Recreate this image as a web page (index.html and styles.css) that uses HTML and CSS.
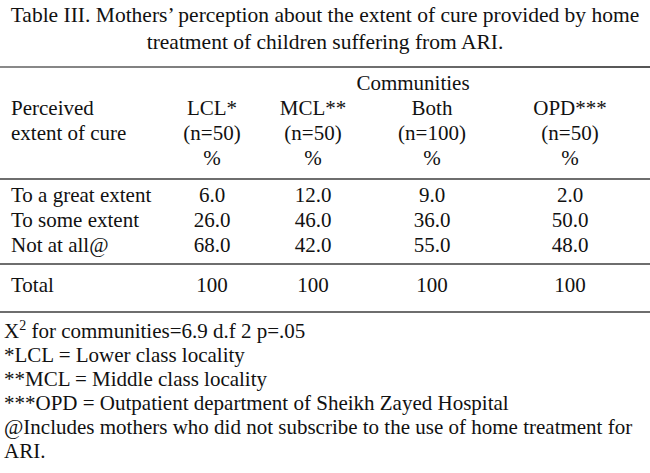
FILE: index.html
```html
<!DOCTYPE html>
<html lang="en">
<head>
<meta charset="utf-8">
<title>Table III</title>
<link rel="stylesheet" href="styles.css">
</head>
<body>
<div class="page">
  <h1 class="title">Table III. Mothers’ perception about the extent of cure provided by home<br>treatment of children suffering from ARI.</h1>
  <div class="rule rule-top"></div>
  <div class="grid head">
    <div class="label"></div>
    <div class="cell"></div>
    <div class="span-communities">Communities</div>
    <div class="cell"></div>
    <div class="label">Perceived</div>
    <div class="cell">LCL*</div>
    <div class="cell">MCL**</div>
    <div class="cell">Both</div>
    <div class="cell">OPD***</div>
    <div class="label">extent of cure</div>
    <div class="cell">(n=50)</div>
    <div class="cell">(n=50)</div>
    <div class="cell">(n=100)</div>
    <div class="cell">(n=50)</div>
    <div class="label"></div>
    <div class="cell">%</div>
    <div class="cell">%</div>
    <div class="cell">%</div>
    <div class="cell">%</div>
  </div>
  <div class="rule"></div>
  <div class="grid body">
    <div class="label">To a great extent</div>
    <div class="cell">6.0</div>
    <div class="cell">12.0</div>
    <div class="cell">9.0</div>
    <div class="cell">2.0</div>
    <div class="label">To some extent</div>
    <div class="cell">26.0</div>
    <div class="cell">46.0</div>
    <div class="cell">36.0</div>
    <div class="cell">50.0</div>
    <div class="label">Not at all@</div>
    <div class="cell">68.0</div>
    <div class="cell">42.0</div>
    <div class="cell">55.0</div>
    <div class="cell">48.0</div>
  </div>
  <div class="rule"></div>
  <div class="grid total">
    <div class="label">Total</div>
    <div class="cell">100</div>
    <div class="cell">100</div>
    <div class="cell">100</div>
    <div class="cell">100</div>
  </div>
  <div class="rule"></div>
  <div class="notes">
    <p>X<sup class="sq">2</sup> for communities=6.9 d.f 2 p=.05</p>
    <p>*LCL = Lower class locality</p>
    <p>**MCL = Middle class locality</p>
    <p>***OPD = Outpatient department of Sheikh Zayed Hospital</p>
    <p>@Includes mothers who did not subscribe to the use of home treatment for ARI.</p>
  </div>
</div>
</body>
</html>
```

FILE: styles.css
```css
html, body {
  margin: 0;
  padding: 0;
  background: #ffffff;
}

.page {
  width: 650px;
  font-family: "Liberation Serif", "Times New Roman", serif;
  font-size: 21px;
  color: #111111;
}

.title {
  margin: 0;
  padding-top: 2px;
  font-size: 21.5px;
  font-weight: normal;
  line-height: 27px;
  text-align: center;
}

.rule {
  height: 2px;
  background: #6e6e6e;
}

.rule-top {
  margin-top: 10px;
  background: linear-gradient(to right, #8a8a8a 0%, #7a7a7a 40%, #555555 100%);
}

.grid {
  display: grid;
  grid-template-columns: 163px 98px 104px 134px 142px;
  line-height: 25px;
}

.label {
  padding-left: 11px;
  white-space: nowrap;
}

.cell {
  text-align: center;
  white-space: nowrap;
}

.span-communities {
  grid-column: 3 / 5;
  padding-left: 66px;
  text-align: center;
}

.head {
  padding-top: 3px;
  padding-bottom: 7px;
}

.body {
  padding-top: 3px;
  padding-bottom: 5px;
}

.total {
  padding-top: 8px;
  padding-bottom: 13px;
}

.notes {
  padding-top: 6px;
  padding-left: 4px;
  padding-right: 10px;
  line-height: 24px;
}

.notes p {
  margin: 0;
}

.sq {
  font-size: 14px;
  line-height: 0;
  vertical-align: 8px;
}
```
